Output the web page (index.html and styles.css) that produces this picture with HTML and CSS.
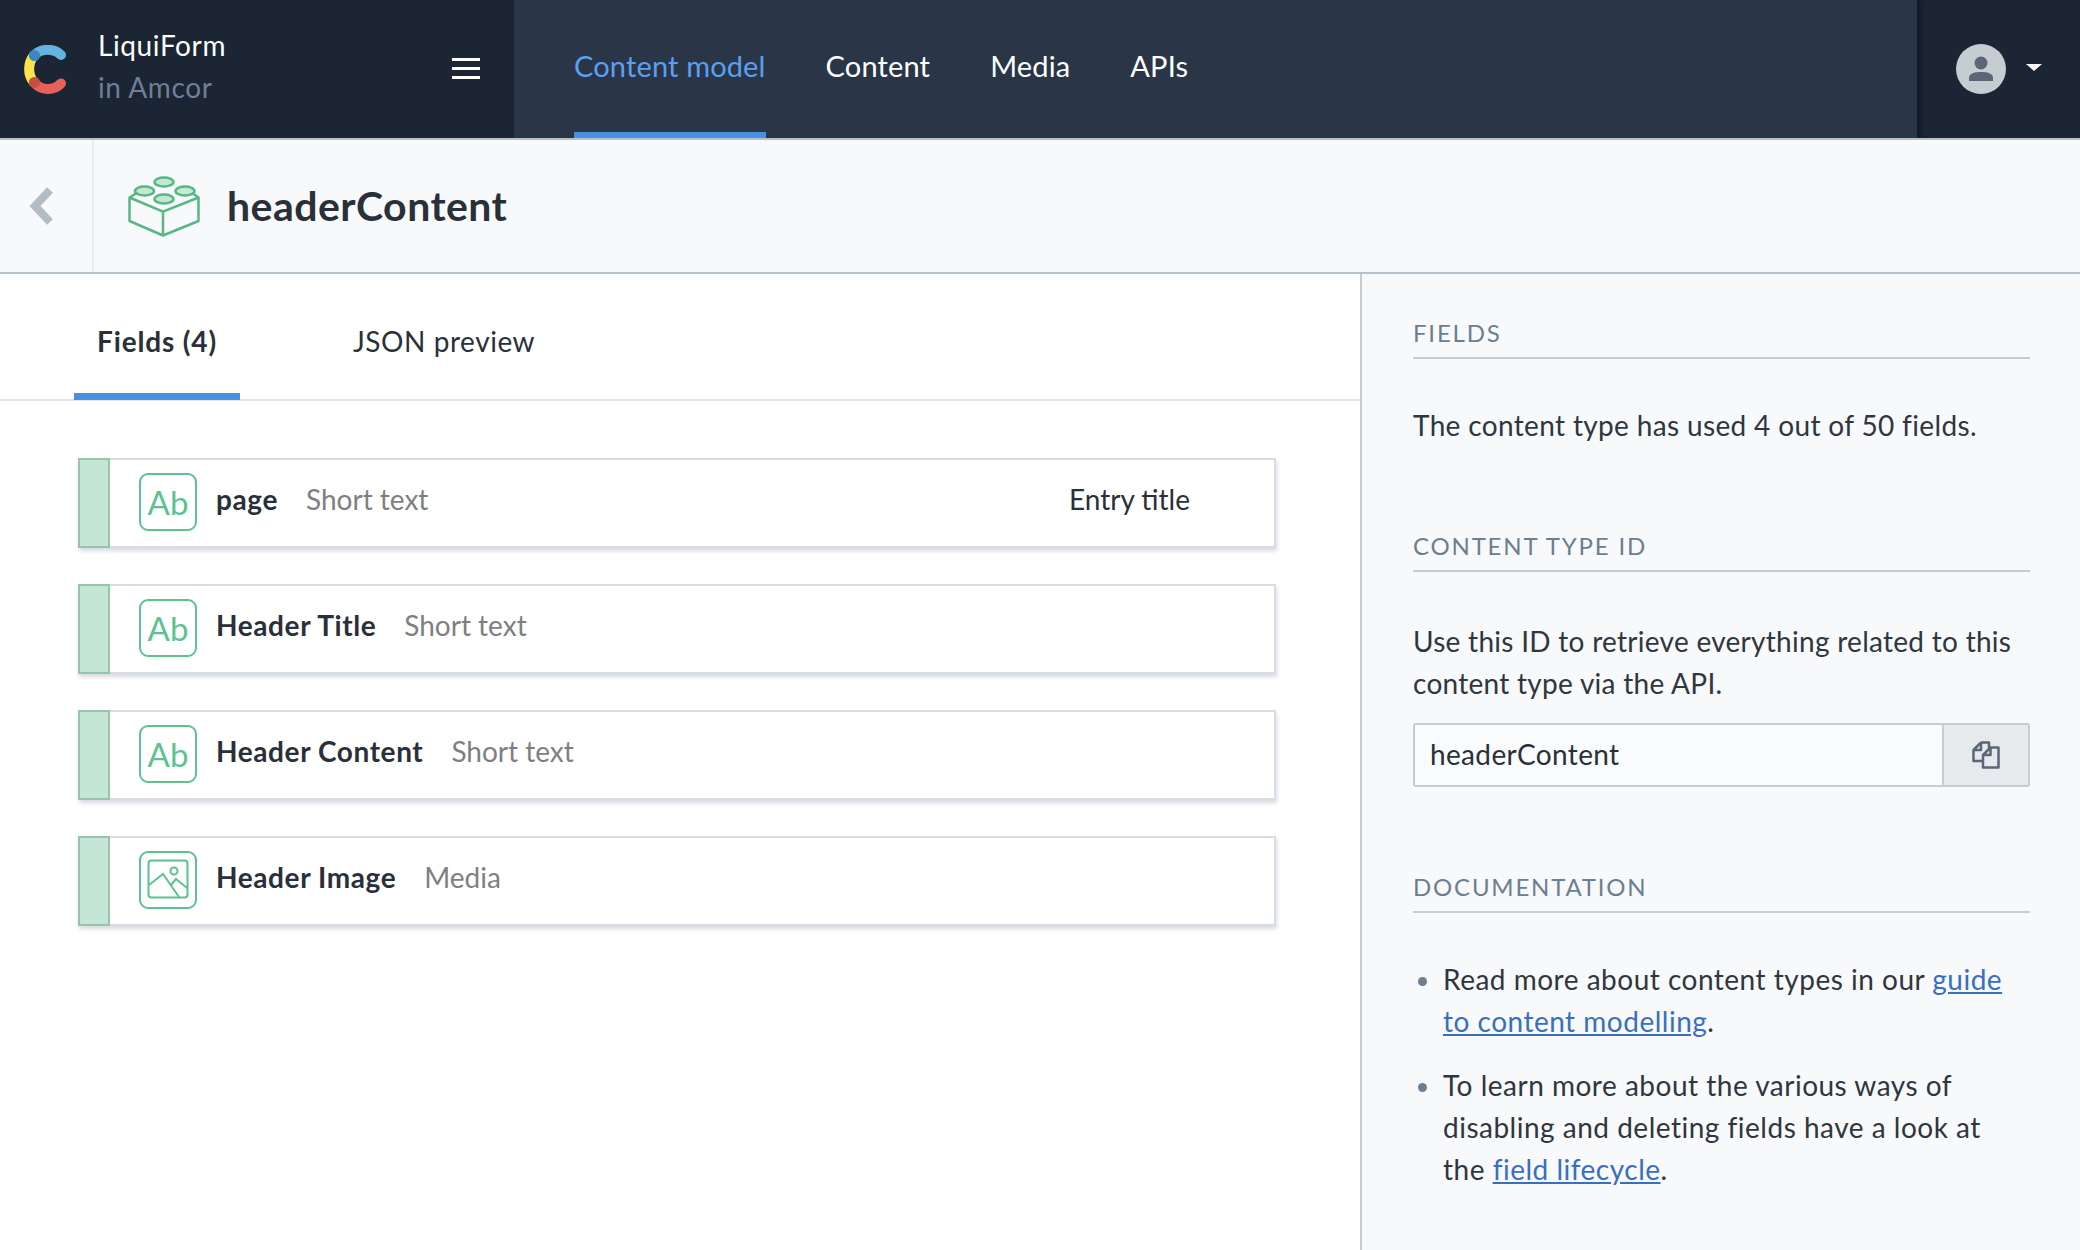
FILE: index.html
```html
<!DOCTYPE html>
<html lang="en">
<head>
<meta charset="utf-8">
<title>headerContent</title>
<link rel="stylesheet" href="styles.css">
</head>
<body>
<header class="topbar">
  <div class="org">
    <svg class="logo" viewBox="0 0 44 49" width="44" height="49">
      <path d="M10 10.500C3.500 18 3.500 30 10 37.400" fill="none" stroke="#fae34c" stroke-width="10" stroke-linecap="round"/>
      <path d="M10 10.500C17 3 30 3 37 10" fill="none" stroke="#64b3e0" stroke-width="10" stroke-linecap="round"/>
      <path d="M10 37.400C17 46 30 46 37 38.400" fill="none" stroke="#e5625b" stroke-width="10" stroke-linecap="round"/>
      <circle cx="10.500" cy="10.500" r="5.500" fill="#3d86bd"/>
      <circle cx="10.500" cy="37.400" r="5.500" fill="#c4503f"/>
    </svg>
    <div class="org-text">
      <div class="org-name">LiquiForm</div>
      <div class="org-sub">in Amcor</div>
    </div>
    <div class="burger"><span></span><span></span><span></span></div>
  </div>
  <nav class="nav">
    <a class="nav-item active">Content model</a>
    <a class="nav-item">Content</a>
    <a class="nav-item">Media</a>
    <a class="nav-item">APIs</a>
  </nav>
  <div class="user">
    <svg class="avatar" viewBox="0 0 50 50" width="50" height="50">
      <circle cx="25" cy="25" r="25" fill="#c5cdd3"/>
      <circle cx="25" cy="19" r="6.500" fill="#5b6676"/>
      <path d="M13 37V34C13 29 19 28 25 28S37 29 37 34V37Z" fill="#5b6676"/>
    </svg>
    <span class="caret"></span>
  </div>
</header>
<section class="subhead">
  <div class="back">
    <svg viewBox="0 0 26 40" width="26" height="40"><path d="M22 4L7 20L22 36" fill="none" stroke="#b1bcc3" stroke-width="8"/></svg>
  </div>
  <svg class="brick" viewBox="0 0 72 61" width="72" height="61">
    <g fill="#c5e8d3" stroke="#58b785" stroke-width="2.500">
      <ellipse cx="36" cy="6" rx="9.500" ry="4.500"/>
      <ellipse cx="16.500" cy="15" rx="9.500" ry="4.500"/>
      <ellipse cx="57" cy="15" rx="9.500" ry="4.500"/>
      <ellipse cx="36" cy="23" rx="9.500" ry="4.500"/>
    </g>
    <path d="M8 17.500L1.500 21.500L35 35.700L70.500 21.500L65 17.500M1.500 21.500V45L35 59.500L70.500 45V21.500M35 35.700V59.500" fill="none" stroke="#58b785" stroke-width="2.500" stroke-linejoin="round"/>
  </svg>
  <h1 class="title">headerContent</h1>
</section>
<main class="layout">
  <section class="main">
    <div class="tabs">
      <a class="tab active">Fields (4)</a>
      <a class="tab">JSON preview</a>
    </div>
    <ul class="fields">
      <li class="field">
        <span class="handle"></span>
        <span class="ficon">Ab</span>
        <span class="fname">page</span><span class="ftype">Short text</span>
        <span class="fmeta">Entry title</span>
      </li>
      <li class="field">
        <span class="handle"></span>
        <span class="ficon">Ab</span>
        <span class="fname">Header Title</span><span class="ftype">Short text</span>
      </li>
      <li class="field">
        <span class="handle"></span>
        <span class="ficon">Ab</span>
        <span class="fname">Header Content</span><span class="ftype">Short text</span>
      </li>
      <li class="field">
        <span class="handle"></span>
        <span class="ficon">
          <svg viewBox="0 0 42 42" width="42" height="42">
            <rect x="1.500" y="1.500" width="39" height="37" rx="3" fill="none" stroke="#5cc28f" stroke-width="2"/>
            <circle cx="27" cy="12" r="3.500" fill="none" stroke="#5cc28f" stroke-width="2"/>
            <path d="M2 26L16 15L32 38M24 26L29 20L40 29" fill="none" stroke="#5cc28f" stroke-width="2"/>
          </svg>
        </span>
        <span class="fname">Header Image</span><span class="ftype">Media</span>
      </li>
    </ul>
  </section>
  <aside class="side">
    <h2 class="side-h">Fields</h2>
    <p class="side-p">The content type has used 4 out of 50 fields.</p>
    <h2 class="side-h">Content type ID</h2>
    <p class="side-p tight">Use this ID to retrieve everything related to this content type via the API.</p>
    <div class="copy">
      <span class="copy-val">headerContent</span>
      <span class="copy-btn">
        <svg viewBox="0 0 28 28" width="28" height="28" fill="none" stroke="#5b6676" stroke-width="2.500" stroke-linejoin="round">
          <path d="M9 1.500H17V7M9 1.500L1.500 9V20H10M9 1.500V9H1.500"/>
          <path d="M18.500 6.500H26.500V26.500H11V14ZM18.500 6.500V14H11" fill="#e6eaec"/>
        </svg>
      </span>
    </div>
    <h2 class="side-h">Documentation</h2>
    <ul class="docs">
      <li>Read more about content types in our <a class="link">guide to content modelling</a>.</li>
      <li>To learn more about the various ways of disabling and deleting fields have a look at the <a class="link">field lifecycle</a>.</li>
    </ul>
  </aside>
</main>
</body>
</html>
```
FILE: styles.css
```css
* { box-sizing: border-box; }
html, body { margin: 0; height: 100%; overflow: hidden; }
body { font-family: Lato, "Open Sans", sans-serif; font-size: 28px; color: #2a3039; background: #fff; width: 2080px; height: 1250px; display: flex; flex-direction: column; }
.topbar { height: 140px; flex: none; display: flex; background: #2a3648; border-bottom: 2px solid #b5c2c9; }
.org { width: 514px; flex: none; background: #1b2533; display: flex; align-items: center; padding-left: 24px; padding-right: 34px; }
.logo { flex: none; }
.org-text { margin-left: 30px; margin-top: -7px; flex: 1; line-height: 42px; letter-spacing: .6px; }
.org-name { color: #fff; }
.org-sub { color: #6f7f98; }
.burger { display: flex; flex-direction: column; gap: 6px; width: 28px; margin-top: -2px; }
.burger span { height: 3px; background: #fff; }
.nav { flex: 1; display: flex; padding-left: 60px; gap: 60px; letter-spacing: .15px; }
.nav-item { color: #fff; font-size: 29px; line-height: 132px; height: 138px; }
.nav-item.active { color: #5b9fef; border-bottom: 6px solid #4a90e2; }
.user { width: 163px; flex: none; background: #1b2533; display: flex; align-items: center; padding-left: 39px; box-shadow: inset 7px 0 6px -5px rgba(0,0,0,.45); }
.caret { margin-left: 20px; margin-top: -4px; border-top: 7px solid #fff; border-left: 8px solid transparent; border-right: 8px solid transparent; }
.subhead { height: 134px; flex: none; display: flex; align-items: center; background: #f7f9fa; border-bottom: 2px solid #b5c2c9; }
.back { width: 94px; height: 100%; flex: none; display: flex; align-items: center; padding-left: 28px; border-right: 2px solid #e9edef; }
.brick { margin-left: 34px; flex: none; margin-top: 0; }
.title { margin: -2px 0 0 27px; font-size: 41px; letter-spacing: .45px; font-weight: 700; color: #2a3039; line-height: 1; }
.layout { flex: 1; display: flex; min-height: 0; }
.main { width: 1360px; flex: none; background: #fff; }
.tabs { height: 127px; display: flex; border-bottom: 2px solid #dde3e6; padding-left: 74px; gap: 90px; }
.tab { padding: 0 23px; height: 126px; line-height: 134px; border-bottom: 7px solid transparent; letter-spacing: .55px; }
.tab.active { font-weight: 700; letter-spacing: .85px; border-bottom-color: #4a90e2; }
.fields { list-style: none; margin: 57px 0 0 78px; padding: 0; width: 1198px; display: flex; flex-direction: column; gap: 36px; }
.field { height: 90px; display: flex; align-items: center; background: #fff; border: 2px solid #d8dde3; border-left: none; box-shadow: 1px 3px 4px rgba(140,150,170,.35); }
.handle { width: 32px; height: 90px; flex: none; background: #c4e7d5; border: 2px solid #98c4ab; margin: -2px 0; }
.ficon { width: 58px; height: 58px; flex: none; margin: -2px 0 0 29px; border: 2px solid #5cc28f; border-radius: 9px; color: #5cc28f; font-size: 33px; line-height: 52px; padding-bottom: 1px; display: flex; align-items: center; justify-content: center; }
.fname { margin: -8px 0 0 19px; font-weight: 700; letter-spacing: .6px; }
.ftype { margin: -8px 0 0 28px; color: #7f7f7f; }
.fmeta { margin: -8px 84px 0 auto; }
.side { flex: 1; background: #f7f9fa; border-left: 2px solid #c5cdd3; padding: 44px 50px 0 51px; letter-spacing: .35px; }
.side-h { margin: 0 0 45px; padding-bottom: 8px; border-bottom: 2px solid #c5cdd3; font-size: 24px; line-height: 30px; font-weight: 400; letter-spacing: 1.800px; text-transform: uppercase; color: #6b7f90; height: 41px; }
.side-p { margin: 0 0 85px; line-height: 42px; color: #2f3640; }
.side-p.tight { margin: 0 0 19px; padding-top: 3px; letter-spacing: .28px; }
.copy { display: flex; height: 64px; margin-bottom: 85px; border: 2px solid #c5cdd3; border-radius: 3px; }
.copy-val { flex: 1; background: #f9fbfc; padding-left: 15px; line-height: 58px; }
.copy-btn { width: 86px; flex: none; background: #e6eaec; border-left: 2px solid #c5cdd3; display: flex; align-items: center; justify-content: center; }
.docs { margin: 0; padding: 0 4px 0 30px; line-height: 42px; color: #2f3640; letter-spacing: .5px; }
.docs li { margin-bottom: 22px; }
.docs li::marker { color: #6b7f90; }
.link { color: #3a6fc0; text-decoration: underline; }
```
